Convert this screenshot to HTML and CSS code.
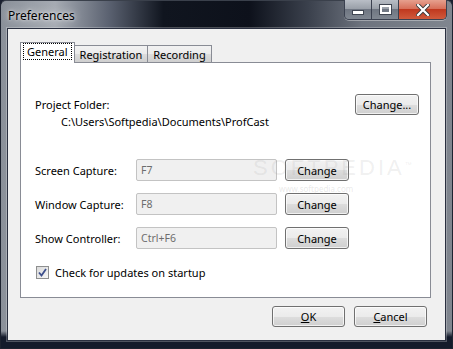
FILE: index.html
```html
<!DOCTYPE html>
<html lang="en">
<head>
    <meta charset="UTF-8">
    <title>Preferences</title>
    <link rel="stylesheet" href="styles.css">
</head>
<body>
    <div class="window">
        <div class="titlebar">
            <span class="title">Preferences</span>
            <div class="caption-buttons">
                <div class="cap-btn cap-min"><span class="min-glyph"></span></div>
                <div class="cap-btn cap-max"><span class="max-glyph"></span></div>
                <div class="cap-btn cap-close">
                    <svg width="14" height="12" viewBox="0 0 14 12">
                        <path d="M2 1 L12 11 M12 1 L2 11" stroke="#3a3a3a" stroke-width="4" stroke-linecap="square"/>
                        <path d="M2 1 L12 11 M12 1 L2 11" stroke="#ffffff" stroke-width="2.2" stroke-linecap="square"/>
                    </svg>
                </div>
            </div>
        </div>

        <div class="client">
            <div class="tabs">
                <div class="tab active"><span class="focus">General</span></div>
                <div class="tab">Registration</div>
                <div class="tab">Recording</div>
            </div>

            <div class="panel">
                <div class="folder-row">
                    <span>Project Folder:</span>
                    <button class="btn btn-wide">Change...</button>
                </div>
                <div class="folder-path">C:\Users\Softpedia\Documents\ProfCast</div>

                <div class="hotkeys">
                    <div class="hotkey-row">
                        <span class="hotkey-label">Screen Capture:</span>
                        <div class="field">F7</div>
                        <button class="btn">Change</button>
                    </div>
                    <div class="hotkey-row">
                        <span class="hotkey-label">Window Capture:</span>
                        <div class="field">F8</div>
                        <button class="btn">Change</button>
                    </div>
                    <div class="hotkey-row">
                        <span class="hotkey-label">Show Controller:</span>
                        <div class="field">Ctrl+F6</div>
                        <button class="btn">Change</button>
                    </div>
                </div>

                <label class="check-row">
                    <span class="checkbox">
                        <svg width="9" height="9" viewBox="0 0 9 9">
                            <path d="M1 4.5 L3.5 7.5 L8 1" fill="none" stroke="#3d4f8c" stroke-width="1.8"/>
                        </svg>
                    </span>
                    Check for updates on startup
                </label>

                <div class="watermark">SOFTPEDIA<sup>™</sup></div>
                <div class="watermark-url">www.softpedia.com</div>
            </div>

            <div class="dialog-buttons">
                <button class="btn btn-dialog"><u>O</u>K</button>
                <button class="btn btn-dialog"><u>C</u>ancel</button>
            </div>
        </div>
    </div>
</body>
</html>
```

FILE: styles.css
```css
body {
    margin: 0;
    padding: 0;
    background: #1a2030;
    font-family: 'Noto Sans', 'Open Sans', sans-serif;
    font-size: 11px;
    color: #000;
}

.window {
    width: 453px;
    height: 349px;
    box-sizing: border-box;
    padding: 0 6px 7px 6px;
    background:
        linear-gradient(to bottom, rgba(0, 0, 0, 0) 0, rgba(0, 0, 0, 0) 330px, #141b2b 336px),
        linear-gradient(to right, #8a9099 0, #a6abb3 12%, #5a6170 24%, #10151f 36%, #0d111b 55%, #3a404c 68%, #6d737e 80%, #80868f 100%);
    border: 1px solid #1d2330;
    border-top-color: #3a404b;
    border-radius: 6px 6px 0 0;
    display: flex;
    flex-direction: column;
}

.titlebar {
    height: 27px;
    flex-shrink: 0;
    display: flex;
    justify-content: space-between;
    align-items: flex-start;
}

.title {
    margin: 6px 0 0 1px;
    font-size: 12px;
    color: #000;
    text-shadow: 0 0 8px rgba(255, 255, 255, 0.9), 0 0 3px rgba(255, 255, 255, 0.8);
}

.caption-buttons {
    display: flex;
    margin-top: -1px;
    margin-right: -1px;
    border: 1px solid #3b4150;
    border-top: none;
    border-radius: 0 0 5px 5px;
    overflow: hidden;
    box-shadow: 0 1px 0 rgba(255, 255, 255, 0.35);
}

.cap-btn {
    height: 19px;
    display: flex;
    align-items: center;
    justify-content: center;
    box-sizing: border-box;
}

.cap-min,
.cap-max {
    width: 27px;
    background: linear-gradient(to bottom, #b9bec6 0, #9aa0a9 45%, #6f7682 50%, #808791 100%);
    border-right: 1px solid #3b4150;
}

.cap-close {
    width: 47px;
    background: linear-gradient(to bottom, #e6a08e 0, #d7705a 45%, #c0391f 50%, #d05a3c 100%);
}

.min-glyph {
    width: 10px;
    height: 3px;
    margin-top: 6px;
    background: #fff;
    border: 1px solid #404652;
}

.max-glyph {
    width: 7px;
    height: 5px;
    border: 2px solid #fff;
    outline: 1px solid #404652;
}

.client {
    flex: 1;
    min-height: 0;
    background: #f0f0f0;
    border: 1px solid #2a3040;
    box-shadow: 0 0 0 1px rgba(255, 255, 255, 0.25);
    padding: 14px 14px 0 12px;
    display: flex;
    flex-direction: column;
}

.tabs {
    display: flex;
    align-items: flex-end;
    height: 19px;
    flex-shrink: 0;
    position: relative;
    z-index: 1;
}

.tab {
    height: 16px;
    padding: 0 5px;
    line-height: 17px;
    border: 1px solid #898c95;
    border-bottom: none;
    margin-left: -1px;
    background: linear-gradient(to bottom, #f2f2f2 0, #ebebeb 50%, #dddddd 51%, #cfcfcf 100%);
}

.tab:first-child {
    margin-left: 0;
}

.tab.active {
    height: 20px;
    line-height: 17px;
    padding: 0 3px;
    background: #fff;
    margin-bottom: -1px;
}

.focus {
    display: inline-block;
    padding: 0 3px;
    line-height: 15px;
    outline: 1px dotted #000;
}

.panel {
    position: relative;
    flex-shrink: 0;
    height: 236px;
    box-sizing: border-box;
    background: #fff;
    border: 1px solid #898c95;
    padding: 31px 11px 0 14px;
}

.folder-row {
    display: flex;
    justify-content: space-between;
    align-items: center;
    height: 21px;
}

.folder-path {
    margin-left: 26px;
    line-height: 14px;
}

.hotkeys {
    margin-top: 30px;
    display: flex;
    flex-direction: column;
    gap: 12px;
}

.hotkey-row {
    display: flex;
    align-items: center;
    height: 22px;
}

.hotkey-label {
    width: 101px;
}

.field {
    width: 141px;
    height: 22px;
    box-sizing: border-box;
    border: 1px solid #c3c3c3;
    border-radius: 2px;
    background: #f0f0f0;
    color: #6d6d6d;
    padding-left: 4px;
    line-height: 20px;
    font-size: 10.5px;
}

.btn {
    font-family: 'Noto Sans', 'Open Sans', sans-serif;
    font-size: 11px;
    color: #000;
    height: 22px;
    width: 64px;
    padding: 0;
    margin-left: 8px;
    border: 1px solid #707070;
    border-radius: 3px;
    background: linear-gradient(to bottom, #f2f2f2 0, #ebebeb 50%, #dddddd 51%, #cfcfcf 100%);
    box-shadow: inset 0 0 0 1px rgba(255, 255, 255, 0.7);
}

.btn-wide {
    height: 21px;
}

.check-row {
    display: flex;
    align-items: center;
    gap: 6px;
    margin-top: 16px;
    padding-left: 1px;
}

.checkbox {
    width: 13px;
    height: 13px;
    box-sizing: border-box;
    border: 1px solid #8e8f8f;
    background: linear-gradient(to bottom right, #dadada, #f6f6f6);
    display: flex;
    align-items: center;
    justify-content: center;
}

.watermark {
    position: absolute;
    left: 232px;
    top: 92px;
    font-family: 'Liberation Sans', sans-serif;
    font-size: 22px;
    letter-spacing: 3px;
    color: rgba(150, 150, 150, 0.15);
}

.watermark sup {
    font-size: 7px;
}

.watermark-url {
    position: absolute;
    left: 258px;
    top: 120px;
    font-size: 8px;
    color: rgba(150, 150, 150, 0.22);
}

.dialog-buttons {
    display: flex;
    justify-content: flex-end;
    gap: 9px;
    margin-top: 8px;
    padding-right: 4px;
}

.btn-dialog {
    width: 73px;
    height: 21px;
    margin-left: 0;
}
```
